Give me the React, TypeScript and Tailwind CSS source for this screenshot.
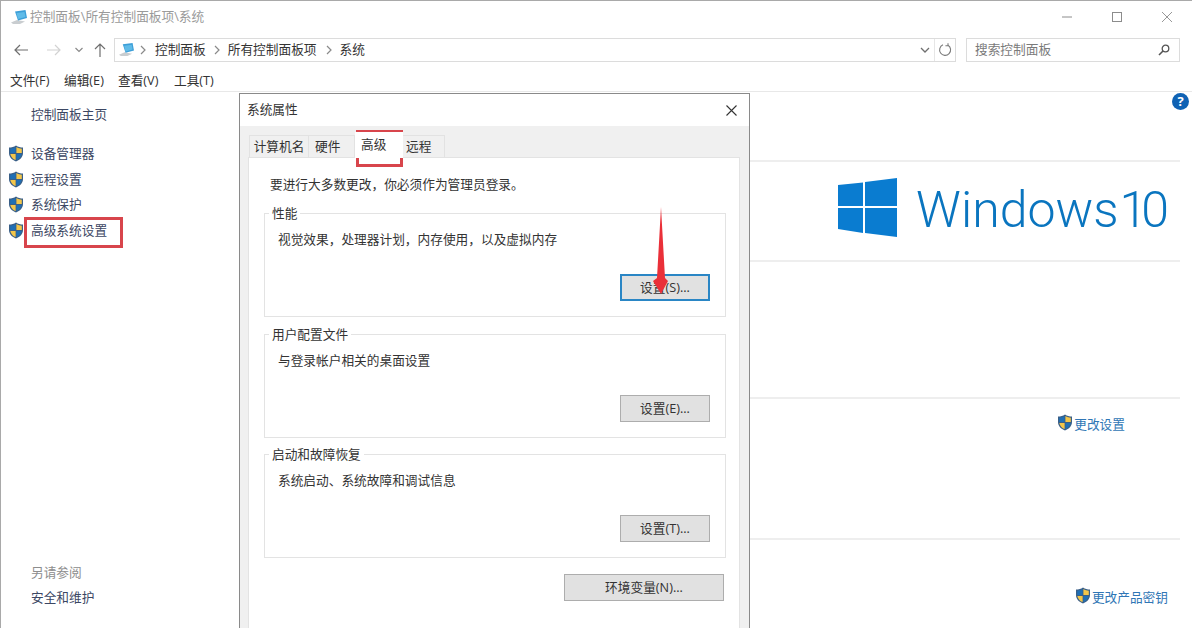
import React from "react";

const FONT = "font-['Open_Sans','Noto_Sans_CJK_SC',sans-serif]";

function Shield({ className = "" }: { className?: string }) {
  return (
    <svg viewBox="0 0 16 17" className={`h-[17px] w-[16px] shrink-0 ${className}`}>
      <path d="M8 .5C10 2 12.5 2.5 15 2.5V8c0 4-3 7-7 8.5C4 15 1 12 1 8V2.5C3.5 2.5 6 2 8 .5Z" fill="#3a5f87" />
      <path d="M7.6 2C5.9 3 4 3.6 2.2 3.7V8.1h5.4Z" fill="#1f6fb5" />
      <path d="M8.4 2c1.7 1 3.6 1.6 5.4 1.7V8.1H8.4Z" fill="#f3c64a" />
      <path d="M2.3 8.9h5.3V15C4.9 14 2.9 12 2.3 8.9Z" fill="#f3c64a" />
      <path d="M8.4 8.9h5.3C13.1 12 11.1 14 8.4 15Z" fill="#1f6fb5" />
    </svg>
  );
}

function Computer({ className = "" }: { className?: string }) {
  return (
    <svg viewBox="0 0 18 16" className={className}>
      <path d="M1 13.5 7 11l8 1.5-5 2.5H3Z" fill="#c9cdd0" />
      <path d="M5 2.5 15.5 1l1.5 8-9 2.5Z" fill="#3d9fd8" />
      <path d="M6.5 4 14.5 3l1 5-7.5 2Z" fill="#5fbbe8" />
    </svg>
  );
}

function Chevron() {
  return (
    <svg viewBox="0 0 8 10" className="h-[10px] w-[8px] shrink-0">
      <path d="M2 1l4 4-4 4" fill="none" stroke="#8a8a8a" strokeWidth="1.2" />
    </svg>
  );
}

function SideLink({ label }: { label: string }) {
  return (
    <div className="flex h-[25.5px] items-center">
      <span className="w-[7px]" />
      <Shield />
      <span className="ml-[7px] text-[#3c4763]">{label}</span>
    </div>
  );
}

function Group({ title, text, button, focus }: { title: string; text: string; button: string; focus?: boolean }) {
  return (
    <div className="relative flex h-[104px] w-[462px] flex-col justify-between border border-[#e3e3e3] pt-[15px] pb-[15px] pl-[13px]">
      <span className="absolute -top-[11px] left-[4px] bg-white px-[3px] leading-[20px] text-[#333]">{title}</span>
      <span className="leading-[20px] text-[#333]">{text}</span>
      <button
        className={`ml-auto mr-[15px] h-[27px] w-[90px] bg-[#e1e1e1] text-[#333] ${focus ? "border-2 border-[#2a86c5]" : "border border-[#adadad]"}`}
      >
        {button}
      </button>
    </div>
  );
}

export default function App() {
  return (
    <div className={`relative flex h-[628px] w-[1192px] flex-col overflow-hidden border-t border-l border-[#a9a9a9] bg-white text-[12.7px] ${FONT}`}>
      {/* title bar */}
      <div className="flex h-[32px] shrink-0 items-center pl-[9px] pr-[20px]">
        <Computer className="h-[16px] w-[18px]" />
        <span className="ml-[2px] text-[#9a9a9a]">控制面板\所有控制面板项\系统</span>
        <div className="ml-auto flex items-center gap-[40px]">
          <svg viewBox="0 0 10 10" className="h-[10px] w-[10px]"><path d="M0 5h10" stroke="#8c8c8c" strokeWidth="1" /></svg>
          <svg viewBox="0 0 10 10" className="h-[10px] w-[10px]"><rect x=".5" y=".5" width="9" height="9" fill="none" stroke="#8c8c8c" /></svg>
          <svg viewBox="0 0 10 10" className="h-[10px] w-[10px]"><path d="M0 0l10 10M10 0 0 10" stroke="#8c8c8c" strokeWidth=".9" /></svg>
        </div>
      </div>

      {/* nav row */}
      <div className="flex h-[33px] shrink-0 items-center pl-[13px]">
        <svg viewBox="0 0 14 12" className="h-[12px] w-[14px]"><path d="M14 6H1M6 1 1 6l5 5" fill="none" stroke="#6f6f6f" strokeWidth="1.2" /></svg>
        <svg viewBox="0 0 14 12" className="ml-[19px] h-[12px] w-[14px]"><path d="M0 6h13M8 1l5 5-5 5" fill="none" stroke="#d2d2d2" strokeWidth="1.2" /></svg>
        <svg viewBox="0 0 8 6" className="ml-[14px] h-[6px] w-[8px]"><path d="M.5 1 4 4.5 7.5 1" fill="none" stroke="#8a8a8a" strokeWidth="1.2" /></svg>
        <svg viewBox="0 0 12 14" className="ml-[11px] h-[14px] w-[12px]"><path d="M6 14V1M1 6l5-5 5 5" fill="none" stroke="#6f6f6f" strokeWidth="1.2" /></svg>

        <div className="ml-[8px] flex h-[24px] w-[842px] items-center border border-[#dcdcdc] pl-[3px]">
          <Computer className="h-[15px] w-[17px]" />
          <span className="ml-[4px]"><Chevron /></span>
          <span className="ml-[8px] text-[#333]">控制面板</span>
          <span className="ml-[7px]"><Chevron /></span>
          <span className="ml-[7px] text-[#333]">所有控制面板项</span>
          <span className="ml-[8px]"><Chevron /></span>
          <span className="ml-[7px] text-[#333]">系统</span>
          <svg viewBox="0 0 10 6" className="ml-auto h-[6px] w-[10px]"><path d="M1 1l4 4 4-4" fill="none" stroke="#6f6f6f" strokeWidth="1.3" /></svg>
          <span className="ml-[4px] h-[22px] w-px bg-[#e6e6e6]" />
          <svg viewBox="0 0 14 14" className="ml-[3px] mr-[3px] h-[14px] w-[14px]"><path d="M10 2.2A5.5 5.5 0 1 1 5 1.8M10 .2v2.6H7.4" fill="none" stroke="#7a7a7a" strokeWidth="1.1" /></svg>
        </div>

        <div className="ml-[10px] flex h-[24px] w-[214px] items-center justify-between border border-[#dcdcdc] pl-[8px] pr-[9px]">
          <span className="text-[#7a7a7a]">搜索控制面板</span>
          <svg viewBox="0 0 12 12" className="h-[12px] w-[12px]"><circle cx="7.5" cy="4.5" r="3.3" fill="none" stroke="#555" strokeWidth="1.3" /><path d="M5 7 1 11" stroke="#555" strokeWidth="1.6" /></svg>
        </div>
      </div>

      {/* menu */}
      <div className="flex h-[26px] shrink-0 items-center border-b border-[#e8e8e8] pt-[5px] pl-[9px] text-[#333]">
        <span className="w-[54px]">文件(F)</span>
        <span className="w-[54px]">编辑(E)</span>
        <span className="w-[56px]">查看(V)</span>
        <span>工具(T)</span>
      </div>

      {/* content */}
      <div className="flex min-h-0 flex-1">
        <aside className="flex w-[238px] shrink-0 flex-col pt-[10px] pb-[18px]">
          <div className="flex h-[25px] items-center pl-[30px] text-[#3c4763]">控制面板主页</div>
          <div className="mt-[14px] flex flex-col">
            <SideLink label="设备管理器" />
            <SideLink label="远程设置" />
            <SideLink label="系统保护" />
            <SideLink label="高级系统设置" />
          </div>
          <div className="mt-auto flex h-[25px] items-center pl-[30px] text-[#8d8d8d]">另请参阅</div>
          <div className="flex h-[25px] items-center pl-[30px] text-[#3c4763]">安全和维护</div>
        </aside>

        <main className="flex flex-1 flex-col pr-[12px]">
          <div className="h-[70px] shrink-0 border-b-2 border-[#eeeeee]" />
          <div className="flex h-[100px] shrink-0 items-center justify-end border-b-2 border-[#eeeeee] pr-[17px] pb-[9px]">
            <svg viewBox="0 0 60 60" className="mt-[2px] mr-[18px] h-[60px] w-[60px]">
              <path d="M0 7 25 4.5V28H0ZM27 4 59 0V28H27ZM0 30H25V55L0 51ZM27 30H59V59L27 55Z" fill="#0a7cd0" />
            </svg>
            <span className="mt-[6px] font-['Roboto',sans-serif] text-[50px] leading-none font-light text-[#0a75bf]">Windows</span>
            <span className="mt-[6px] ml-[1px] font-['Roboto',sans-serif] text-[50px] leading-none font-light tracking-[-6px] text-[#0a75bf]">10</span>
          </div>
          <div className="h-[137px] shrink-0 border-b-2 border-[#eeeeee]" />
          <div className="flex h-[141px] shrink-0 items-start justify-end border-b-2 border-[#eeeeee] pt-[15px] pr-[55px]">
            <Shield />
            <span className="ml-px leading-[20px] text-[#2f76b5]">更改设置</span>
          </div>
          <div className="flex flex-1 items-start justify-end pt-[47px] pr-[12px]">
            <Shield />
            <span className="ml-px leading-[20px] text-[#2f76b5]">更改产品密钥</span>
          </div>
        </main>
      </div>

      {/* help */}
      <div className="absolute top-[92px] left-[1171px] flex h-[17px] w-[17px] items-center justify-center rounded-full bg-[#0f62b4] text-[13px] leading-none font-bold text-white">?</div>

      {/* dialog */}
      <div className="absolute top-[92px] left-[238px] flex h-[560px] w-[511px] flex-col border border-[#8a8a8a] bg-white">
        <div className="flex h-[32px] shrink-0 items-center justify-between pr-[12px] pl-[7px] text-[#333]">
          <span>系统属性</span>
          <svg viewBox="0 0 11 11" className="h-[11px] w-[11px]"><path d="M.5.5l10 10M10.5.5l-10 10" stroke="#333" strokeWidth="1.1" /></svg>
        </div>
        <div className="flex flex-1 flex-col bg-[#f0f0f0] pt-[9px] pl-[8px]">
          <div className="relative z-10 -mb-px flex h-[23px] items-end text-[#333]">
            <span className="ml-px flex h-[23px] w-[60px] items-center justify-center border border-b-0 border-[#e2e2e2]">计算机名</span>
            <span className="flex h-[23px] w-[46px] items-center border-t border-r border-[#e2e2e2] pl-[6px]">硬件</span>
            <span className="flex h-[26px] w-[48px] items-start bg-white pl-[6px] pt-[3px]">高级</span>
            <span className="flex h-[23px] w-[42px] items-center border-t border-r border-[#e2e2e2] pl-[3px]">远程</span>
          </div>
          <div className="flex w-[492px] flex-1 flex-col border border-[#e3e3e3] bg-white pt-[16px] pl-[15px]">
            <span className="ml-[6px] leading-[20px] text-[#333]">要进行大多数更改，你必须作为管理员登录。</span>
            <div className="mt-[19px]">
              <Group title="性能" text="视觉效果，处理器计划，内存使用，以及虚拟内存" button="设置(S)..." focus />
            </div>
            <div className="mt-[17px]">
              <Group title="用户配置文件" text="与登录帐户相关的桌面设置" button="设置(E)..." />
            </div>
            <div className="mt-[16px]">
              <Group title="启动和故障恢复" text="系统启动、系统故障和调试信息" button="设置(T)..." />
            </div>
            <button className="mt-[16px] ml-[300px] h-[27px] w-[160px] border border-[#adadad] bg-[#e1e1e1] text-[#333]">环境变量(N)...</button>
          </div>
        </div>
      </div>

      {/* annotations */}
      <div className="absolute top-[216px] left-[23px] h-[31px] w-[99px] border-[3px] border-[#d8454c]" />
      <div className="absolute top-[129px] left-[355px] h-[37px] w-[47px] border-[3px] border-[#d8454c]" />
      <svg viewBox="0 0 40 100" className="absolute top-[199px] left-[639px] h-[100px] w-[40px]">
        <polygon points="21,7 25,78 28,81 21,94 13,81 17,78" fill="#ea3039" />
      </svg>
    </div>
  );
}
